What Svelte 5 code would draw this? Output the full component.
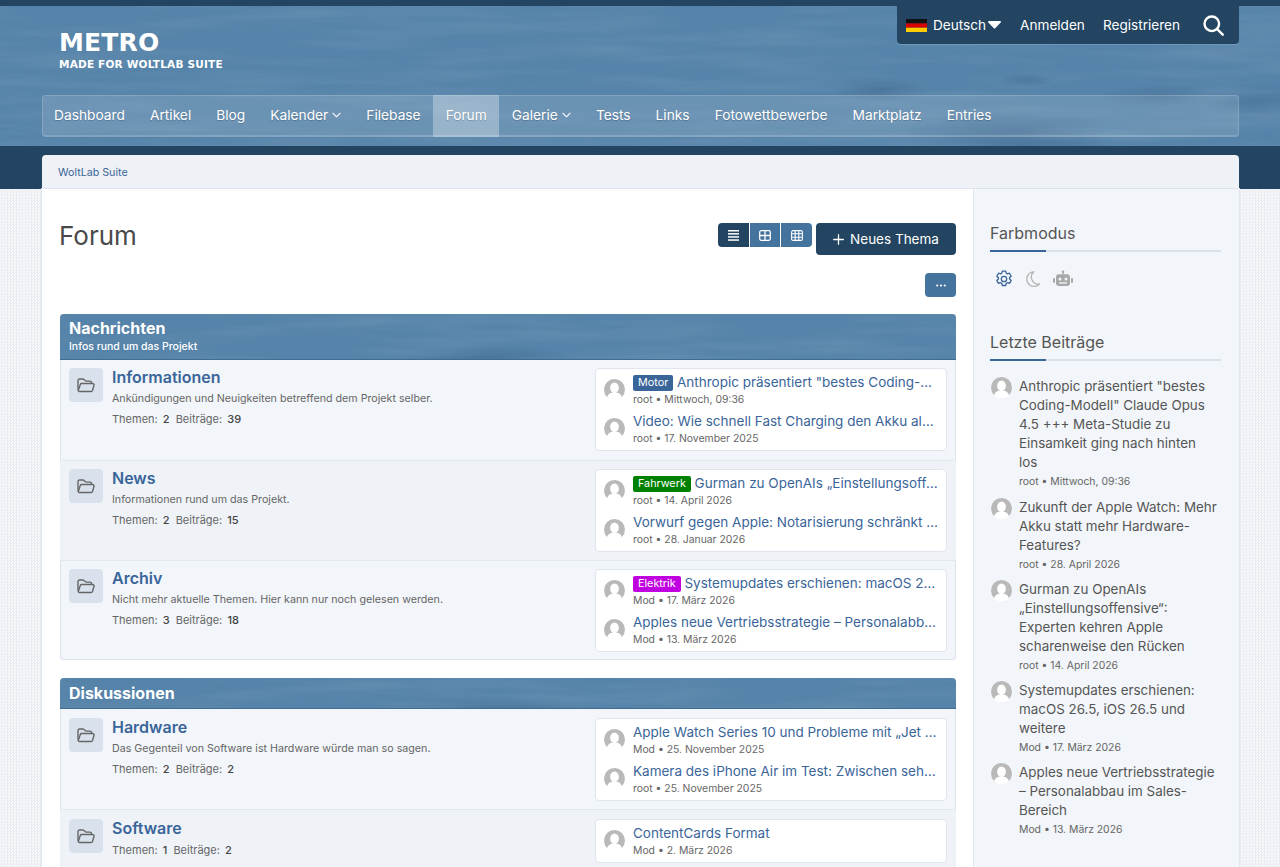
<script>
  const nav = [
    { label: 'Dashboard' },
    { label: 'Artikel' },
    { label: 'Blog' },
    { label: 'Kalender', menu: true },
    { label: 'Filebase' },
    { label: 'Forum', active: true },
    { label: 'Galerie', menu: true },
    { label: 'Tests' },
    { label: 'Links' },
    { label: 'Fotowettbewerbe' },
    { label: 'Marktplatz' },
    { label: 'Entries' }
  ];

  const sections = [
    {
      title: 'Nachrichten',
      sub: 'Infos rund um das Projekt',
      boards: [
        {
          name: 'Informationen',
          desc: 'Ankündigungen und Neuigkeiten betreffend dem Projekt selber.',
          topics: 2,
          posts: 39,
          last: [
            { tag: 'Motor', tagClass: 'motor', title: 'Anthropic präsentiert "bestes Coding-Modell" Claude Opus 4.5', meta: 'root • Mittwoch, 09:36' },
            { title: 'Video: Wie schnell Fast Charging den Akku altern lässt', meta: 'root • 17. November 2025' }
          ]
        },
        {
          name: 'News',
          desc: 'Informationen rund um das Projekt.',
          topics: 2,
          posts: 15,
          last: [
            { tag: 'Fahrwerk', tagClass: 'fahrwerk', title: 'Gurman zu OpenAIs „Einstellungsoffensive“: Experten kehren', meta: 'root • 14. April 2026' },
            { title: 'Vorwurf gegen Apple: Notarisierung schränkt Entwickler ein', meta: 'root • 28. Januar 2026' }
          ]
        },
        {
          name: 'Archiv',
          desc: 'Nicht mehr aktuelle Themen. Hier kann nur noch gelesen werden.',
          topics: 3,
          posts: 18,
          last: [
            { tag: 'Elektrik', tagClass: 'elektrik', title: 'Systemupdates erschienen: macOS 26.5, iOS 26.5 und weitere', meta: 'Mod • 17. März 2026' },
            { title: 'Apples neue Vertriebsstrategie – Personalabbau im Sales-Bereich', meta: 'Mod • 13. März 2026' }
          ]
        }
      ]
    },
    {
      title: 'Diskussionen',
      boards: [
        {
          name: 'Hardware',
          desc: 'Das Gegenteil von Software ist Hardware würde man so sagen.',
          topics: 2,
          posts: 2,
          last: [
            { title: 'Apple Watch Series 10 und Probleme mit „Jet Lag“ und Akku', meta: 'Mod • 25. November 2025' },
            { title: 'Kamera des iPhone Air im Test: Zwischen sehr gut und solide', meta: 'root • 25. November 2025' }
          ]
        },
        {
          name: 'Software',
          topics: 1,
          posts: 2,
          last: [{ title: 'ContentCards Format', meta: 'Mod • 2. März 2026' }]
        }
      ]
    }
  ];

  const recent = [
    { title: 'Anthropic präsentiert "bestes Coding-Modell" Claude Opus 4.5 +++ Meta-Studie zu Einsamkeit ging nach hinten los', meta: 'root • Mittwoch, 09:36' },
    { title: 'Zukunft der Apple Watch: Mehr Akku statt mehr Hardware-Features?', meta: 'root • 28. April 2026' },
    { title: 'Gurman zu OpenAIs „Einstellungsoffensive“: Experten kehren Apple scharenweise den Rücken', meta: 'root • 14. April 2026' },
    { title: 'Systemupdates erschienen: macOS 26.5, iOS 26.5 und weitere', meta: 'Mod • 17. März 2026' },
    { title: 'Apples neue Vertriebsstrategie – Personalabbau im Sales-Bereich', meta: 'Mod • 13. März 2026' }
  ];
</script>

{#snippet avatar(size)}
  <svg class="avatar" width={size} height={size} viewBox="0 0 24 24">
    <circle cx="12" cy="12" r="12" fill="#b9b9b9" />
    <ellipse cx="12" cy="10" rx="5" ry="6" fill="#fff" />
    <path d="M3.5 21c1-4 4.500-5.500 8.500-5.500s7.500 1.500 8.500 5.500a12 12 0 0 1-17 0z" fill="#fff" />
  </svg>
{/snippet}

{#snippet streaks(id)}
  <svg class="streaks" aria-hidden="true">
    <filter {id} x="0" y="0" width="100%" height="100%">
      <feTurbulence type="fractalNoise" baseFrequency=".006 .07" numOctaves="3" seed="4" />
      <feColorMatrix values="0 0 0 0 .24  0 0 0 0 .4  0 0 0 0 .56  0 0 0 .55 -.22" />
    </filter>
    <rect width="100%" height="100%" filter="url(#{id})" />
  </svg>
{/snippet}

<div class="page">
  <header class="top">
    {@render streaks('top-streaks')}
    <div class="user-panel">
      <svg class="flag" width="21" height="13" viewBox="0 0 21 13">
        <rect width="21" height="4.400" fill="#111" />
        <rect y="4.400" width="21" height="4.300" fill="#d80000" />
        <rect y="8.700" width="21" height="4.300" fill="#ffcc00" />
      </svg>
      <span class="lang">Deutsch<svg width="13" height="8" viewBox="0 0 13 8"><path d="M1 0h11c.8 0 1.200.9.700 1.500L7.200 7.300c-.4.400-1 .4-1.400 0L.3 1.500C-.2.900.2 0 1 0z" fill="#fff" /></svg></span>
      <span>Anmelden</span>
      <span>Registrieren</span>
      <svg class="search" width="21" height="21" viewBox="0 0 21 21" fill="none" stroke="#fff" stroke-width="2.400" stroke-linecap="round">
        <circle cx="8.800" cy="8.800" r="7.300" />
        <path d="M14.200 14.200 19.700 19.700" />
      </svg>
    </div>

    <div class="logo">
      <div class="logo-main">METRO</div>
      <div class="logo-sub">MADE FOR WOLTLAB SUITE</div>
    </div>

    <nav class="main-nav">
      {#each nav as item}
        <span class="nav-item" class:active={item.active}>
          {item.label}
          {#if item.menu}
            <svg width="9" height="6" viewBox="0 0 10 6" fill="none" stroke="#fff" stroke-width="1.200" stroke-linecap="round" stroke-linejoin="round"><path d="M1 1l4 4 4-4" /></svg>
          {/if}
        </span>
      {/each}
    </nav>
  </header>

  <div class="band">
    <div class="breadcrumb">WoltLab Suite</div>
  </div>

  <div class="layout">
    <main class="content">
      <div class="title-row">
        <h1>Forum</h1>
        <div class="actions">
          <div class="view-switch">
            <span class="view on">
              <svg width="11" height="11" viewBox="0 0 11 11" fill="#fff"><rect y="0" width="11" height="1.500" /><rect y="3.100" width="11" height="1.500" /><rect y="6.200" width="11" height="1.500" /><rect y="9.300" width="11" height="1.500" /></svg>
            </span>
            <span class="view">
              <svg width="12" height="11" viewBox="0 0 12 11" fill="none" stroke="#fff" stroke-width="1.300"><rect x=".7" y=".7" width="10.600" height="9.600" rx="1.500" /><path d="M6 .7v9.600M.7 5.500h10.600" /></svg>
            </span>
            <span class="view">
              <svg width="12" height="11" viewBox="0 0 12 11" fill="none" stroke="#fff" stroke-width="1.100"><rect x=".6" y=".6" width="10.800" height="9.800" rx="1.500" /><path d="M4.200.6v9.800M7.800.6v9.800M.6 3.800h10.800M.6 7.200h10.800" /></svg>
            </span>
          </div>
          <button class="new-topic">
            <svg width="11" height="11" viewBox="0 0 11 11" stroke="#fff" stroke-width="1.300" stroke-linecap="round"><path d="M5.500.7v9.600M.7 5.500h9.600" /></svg>
            Neues Thema
          </button>
        </div>
      </div>

      <div class="more-row">
        <button class="more">
          <svg width="10" height="3" viewBox="0 0 10 3" fill="#fff"><circle cx="1.200" cy="1.500" r="1.100" /><circle cx="5" cy="1.500" r="1.100" /><circle cx="8.800" cy="1.500" r="1.100" /></svg>
        </button>
      </div>

      {#each sections as section, s}
        <section class="board-section">
          <div class="section-head">
            {@render streaks('head-streaks-' + s)}
            <h2>{section.title}</h2>
            {#if section.sub}<p>{section.sub}</p>{/if}
          </div>
          {#each section.boards as board, i}
            <div class="board" class:alt={i % 2 === 1} class:loose={s === 1}>
              <div class="board-icon">
                <svg width="18" height="15" viewBox="0 0 18 15" fill="none" stroke="#666" stroke-width="1.400" stroke-linejoin="round">
                  <path d="M1 11.500V2.500C1 1.600 1.700 1 2.500 1h3.400c.4 0 .8.200 1.100.5L8.200 2.600c.3.300.700.500 1.100.500H13c.9 0 1.500.7 1.500 1.500v.9" />
                  <path d="M1.200 12.700 3.300 6.500c.2-.6.700-1 1.300-1h11.100c.9 0 1.600.9 1.300 1.800l-1.500 5.200c-.2.600-.7 1-1.300 1H2.500c-.9 0-1.500-.9-1.300-1.800z" />
                </svg>
              </div>
              <div class="board-main">
                <h3>{board.name}</h3>
                {#if board.desc}<p class="desc">{board.desc}</p>{/if}
                <div class="stats">
                  <span>Themen: <b>{board.topics}</b></span>
                  <span>Beiträge: <b>{board.posts}</b></span>
                </div>
              </div>
              <div class="last-posts">
                {#each board.last as post}
                  <div class="last-post">
                    {@render avatar(21)}
                    <div class="last-text">
                      <div class="last-title">
                        {#if post.tag}<span class="tag {post.tagClass}">{post.tag}</span>{/if}
                        {post.title}
                      </div>
                      <div class="meta">{post.meta}</div>
                    </div>
                  </div>
                {/each}
              </div>
            </div>
          {/each}
        </section>
      {/each}
    </main>

    <aside class="sidebar">
      <div class="box">
        <h4>Farbmodus</h4>
        <div class="modes">
          <svg width="18" height="18" viewBox="0 0 18 18" fill="none" stroke="#3a6599" stroke-width="1.300" stroke-linejoin="round">
            <path d="M7.300 1.100h3.400l.5 2.100 1.300.7 2-.7 1.700 3-1.600 1.400v1.400l1.600 1.400-1.700 3-2-.7-1.300.7-.5 2.100H7.300l-.5-2.100-1.300-.7-2 .7-1.700-3 1.600-1.400V7.800L1.800 6.200l1.700-3 2 .7 1.300-.7z" />
            <circle cx="9" cy="9" r="2.700" />
          </svg>
          <svg width="18" height="18" viewBox="0 0 18 18" fill="none" stroke="#b5b5b5" stroke-width="1.300" stroke-linejoin="round">
            <path d="M9.800 1.800A7.300 7.300 0 1 0 15.500 14a7 7 0 0 1-5.700-12.200z" />
          </svg>
          <svg width="20" height="18" viewBox="0 0 20 18" fill="#a8a8a8">
            <circle cx="10" cy="1.800" r="1.300" />
            <rect x="9.400" y="2" width="1.200" height="3" />
            <rect x="3" y="4.300" width="14" height="11.700" rx="3" />
            <rect x="0" y="8" width="2" height="5" rx="1" />
            <rect x="18" y="8" width="2" height="5" rx="1" />
            <circle cx="7" cy="9" r="1.500" fill="#f1f5f9" />
            <circle cx="13" cy="9" r="1.500" fill="#f1f5f9" />
            <rect x="6" y="12.300" width="8" height="1.300" fill="#f1f5f9" />
          </svg>
        </div>
      </div>

      <div class="box">
        <h4>Letzte Beiträge</h4>
        <ul class="recent">
          {#each recent as post}
            <li>
              {@render avatar(21)}
              <div>
                <div class="recent-title">{post.title}</div>
                <div class="meta">{post.meta}</div>
              </div>
            </li>
          {/each}
        </ul>
      </div>
    </aside>
  </div>
</div>

<style>
  :global(body) {
    margin: 0;
    font-family: Inter, "Open Sans", sans-serif;
    color: #555;
  }

  .page {
    height: 100vh;
    overflow: hidden;
    background: repeating-conic-gradient(#e9edf2 0 25%, #f8f9fb 0 50%) 0 0 / 3px 3px;
  }

  .top {
    position: relative;
    height: 140px;
    border-top: 6px solid #234561;
    color: #fff;
    background:
      radial-gradient(ellipse 110px 26px at 1010px 128px, rgba(60, 100, 140, .55), transparent),
      radial-gradient(ellipse 50px 12px at 880px 84px, rgba(60, 100, 140, .55), transparent),
      radial-gradient(ellipse 30px 6px at 1025px 74px, rgba(60, 100, 140, .5), transparent),
      radial-gradient(ellipse 60px 12px at 1160px 90px, rgba(60, 100, 140, .4), transparent),
      radial-gradient(ellipse 60px 20px at 1260px 95px, rgba(60, 100, 140, .45), transparent),
      #5683a9;
  }

  .streaks {
    position: absolute;
    inset: 0;
    width: 100%;
    height: 100%;
    pointer-events: none;
  }

  .user-panel {
    position: absolute;
    top: -6px;
    right: 41px;
    width: 342px;
    height: 44px;
    box-sizing: border-box;
    padding: 6px 15px 0 9px;
    display: flex;
    align-items: center;
    gap: 18px;
    background: #234561;
    border-radius: 0 0 4px 4px;
    box-shadow: 0 1px 0 #6f98b8;
    font-size: 13.600px;
  }

  .flag {
    margin-right: -12px;
  }

  .lang {
    display: flex;
    align-items: center;
    gap: 2px;
    margin-right: 1px;
  }

  .search {
    margin-left: auto;
  }

  .logo {
    position: relative;
    padding: 25px 0 0 59px;
    font-family: "DejaVu Sans", sans-serif;
    font-weight: 700;
    letter-spacing: .2px;
  }

  .logo-main {
    font-size: 25px;
    line-height: 24px;
  }

  .logo-sub {
    font-size: 10.500px;
    line-height: 14px;
    margin-top: 2px;
  }

  .main-nav {
    position: absolute;
    top: 89px;
    left: 42px;
    right: 41px;
    height: 42px;
    box-sizing: border-box;
    display: flex;
    background: rgba(255, 255, 255, .12);
    border: 1px solid rgba(255, 255, 255, .16);
    border-bottom-width: 2px;
    border-radius: 4px;
    font-size: 13.750px;
    text-shadow: 0 1px 1px rgba(0, 0, 0, .2);
  }

  .nav-item {
    display: flex;
    align-items: center;
    gap: 4px;
    padding: 0 12.500px 2px;
    margin-top: -1px;
    margin-bottom: -2px;
  }

  .nav-item:first-child {
    margin-left: -1.500px;
  }

  .nav-item.active {
    background: rgba(255, 255, 255, .3);
  }

  .band {
    background: #234561;
    height: 43px;
    padding: 9px 41px 0 42px;
    box-sizing: border-box;
  }

  .breadcrumb {
    height: 34px;
    padding-left: 16px;
    box-sizing: border-box;
    display: flex;
    align-items: center;
    background: #eef1f6;
    border-radius: 4px 4px 0 0;
    font-size: 10.700px;
    color: #3a6599;
  }

  .layout {
    display: flex;
    margin: 0 41px 0 42px;
    background: #fff;
    border-top: 1px solid #dde3ec;
    box-shadow: -1px 0 0 #dfe6ef, 1px 0 0 #dfe6ef;
    margin-top: -1px;
  }

  .content {
    flex: 1;
    min-width: 0;
    padding: 34px 17px 0 18px;
  }

  .title-row {
    display: flex;
    justify-content: space-between;
    align-items: flex-start;
  }

  h1 {
    margin: 0 0 0 -1px;
    font-size: 26px;
    font-weight: 400;
    line-height: 26px;
    color: #4a4a4a;
  }

  .actions {
    display: flex;
    gap: 4px;
    align-items: flex-start;
  }

  .view-switch {
    display: flex;
    gap: 1px;
    border-radius: 4px;
    overflow: hidden;
  }

  .view {
    width: 30.600px;
    height: 24px;
    display: flex;
    align-items: center;
    justify-content: center;
    background: #44739d;
  }

  .view.on {
    background: #234561;
  }

  .new-topic {
    width: 140px;
    height: 32px;
    border: 0;
    border-radius: 4px;
    background: #234561;
    color: #fff;
    font: 13.500px Inter, sans-serif;
    display: flex;
    align-items: center;
    justify-content: center;
    gap: 6px;
    padding: 0;
  }

  .more-row {
    display: flex;
    justify-content: flex-end;
    margin-top: 18px;
  }

  .more {
    width: 31px;
    height: 24px;
    border: 0;
    padding: 0;
    border-radius: 4px;
    background: #44739d;
    display: flex;
    align-items: center;
    justify-content: center;
  }

  .board-section {
    margin-top: 17px;
    margin-bottom: 18px;
    border-radius: 4px;
    background: #f2f5f9;
    box-shadow: inset 0 0 0 1px #dbe2ec;
  }

  .section-head {
    position: relative;
    overflow: hidden;
    padding: 6px 9px;
    color: #fff;
    border-radius: 4px 4px 0 0;
    border-bottom: 1px solid #3f6c92;
    background:
      radial-gradient(ellipse 90px 14px at 430px 100%, rgba(60, 100, 140, .5), transparent),
      #5683a9;
  }

  h2,
  .section-head p {
    position: relative;
  }

  h2 {
    margin: 0;
    font-size: 16px;
    font-weight: 700;
    line-height: 18px;
  }

  h2:not(:last-child) {
    margin-top: -1px;
  }

  .section-head p {
    margin: 2px 0 -1px;
    font-size: 10.500px;
    font-weight: 500;
    line-height: 15px;
  }

  .board {
    display: flex;
    min-height: 100px;
    box-sizing: border-box;
    padding: 8px 9px;
    border-top: 1px solid #e3e8ef;
  }

  .board.loose {
    padding-top: 9px;
  }

  .board.alt {
    background: #eff3f8;
  }

  .section-head + .board {
    border-top: 0;
  }

  .board-icon {
    width: 34px;
    height: 34px;
    border-radius: 4px;
    background: #d9e2ec;
    display: flex;
    align-items: center;
    justify-content: center;
    flex: none;
    margin-right: 9px;
  }

  .board-main {
    flex: 1;
    min-width: 0;
  }

  h3 {
    margin: 0 0 4px;
    font-size: 16px;
    font-weight: 600;
    line-height: 19px;
    color: #3a6599;
  }

  .desc {
    margin: 0 0 4px;
    font-size: 10.700px;
    line-height: 16px;
    color: #666;
  }

  .stats {
    display: flex;
    gap: 6px;
    font-size: 11px;
    line-height: 16px;
    color: #666;
  }

  .stats b {
    font-weight: 500;
    color: #444;
    margin-left: 2px;
  }

  .last-posts {
    width: 352px;
    flex: none;
    box-sizing: border-box;
    align-self: flex-start;
    background: #fff;
    border: 1px solid #dfe5ed;
    border-radius: 4px;
    padding: 1px 8px 2px;
  }

  .last-post {
    display: flex;
    align-items: center;
    gap: 8px;
    height: 39px;
  }

  .avatar {
    flex: none;
  }

  .last-text {
    min-width: 0;
    flex: 1;
  }

  .last-title {
    font-size: 13.500px;
    line-height: 20px;
    color: #3a6599;
    white-space: nowrap;
    overflow: hidden;
    text-overflow: ellipsis;
  }

  .tag {
    display: inline-block;
    padding: 0 5px;
    border-radius: 2px;
    font-size: 10.800px;
    line-height: 16px;
    font-weight: 400;
    color: #fff;
    vertical-align: 1px;
  }

  .motor {
    background: #3a6599;
  }

  .fahrwerk {
    background: #008000;
  }

  .elektrik {
    background: #c000e0;
  }

  .meta {
    font-size: 10.400px;
    line-height: 15px;
    color: #666;
  }

  .sidebar {
    width: 266px;
    flex: none;
    box-sizing: border-box;
    padding: 34px 18px 0 16px;
    background: #f2f5f9;
    border-left: 1px solid #e3e8ef;
  }

  .box {
    margin-bottom: 44px;
  }

  h4 {
    margin: 0 0 17px;
    padding-bottom: 7px;
    font-size: 16px;
    font-weight: 400;
    line-height: 20px;
    color: #555;
    border-bottom: 2px solid transparent;
    border-image: linear-gradient(to right, #3a6599 57px, #d9e2ec 57px) 1;
  }

  .modes {
    display: flex;
    align-items: center;
    gap: 11px;
    padding: 1px 0 0 5px;
  }

  .recent {
    list-style: none;
    margin: -1px 0 0 1px;
    padding: 0;
  }

  .recent li {
    display: flex;
    gap: 7px;
    margin-bottom: 8px;
  }

  .recent li:first-child {
    margin-bottom: 9px;
  }

  .recent-title {
    font-size: 13.400px;
    line-height: 19px;
    color: #555;
    margin-bottom: 2px;
    padding-right: 3.500px;
  }
</style>
